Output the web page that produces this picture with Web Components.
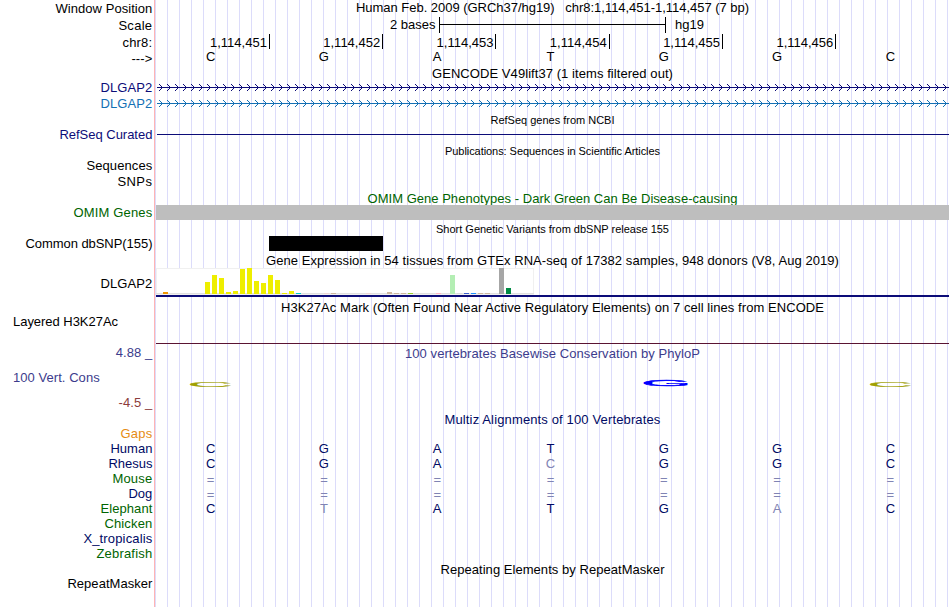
<!DOCTYPE html>
<html lang="en">
<head>
<meta charset="utf-8">
<title>hg19 chr8:1,114,451-1,114,457</title>
<style>
  body {
    margin: 0;
    background: #fff;
    overflow: hidden;
    font: 13px/15px "Liberation Sans", Arial, sans-serif;
    color: #000;
  }
</style>
</head>
<body>
<genome-browser>
  <track-row h="17">
    <track-text slot="label" style="--top: 1px" w="97">Window Position</track-text>
    <track-text slot="title" w="393">Human Feb. 2009 (GRCh37/hg19) &nbsp; chr8:1,114,451-1,114,457 (7 bp)</track-text>
  </track-row>
  <track-row h="17">
    <track-text slot="label" style="--top: 1px" w="34">Scale</track-text>
    <scale-bar from="2 bases" to="hg19"></scale-bar>
  </track-row>
  <track-row h="15">
    <track-text slot="label" style="--top: 1px" w="30">chr8:</track-text>
    <position-ruler start="1114451" count="6"></position-ruler>
  </track-row>
  <track-row h="17">
    <track-text slot="label" style="--top: 2px" w="21">---&gt;</track-text>
    <base-row bases="CGATGGC"></base-row>
  </track-row>

  <track-row h="14">
    <track-text slot="title" w="241">GENCODE V49lift37 (1 items filtered out)</track-text>
  </track-row>
  <track-row h="16" color="#0c0c78">
    <track-text slot="label" w="52">DLGAP2</track-text>
    <gene-line strand></gene-line>
  </track-row>
  <track-row h="16" color="#1470b4">
    <track-text slot="label" w="52">DLGAP2</track-text>
    <gene-line strand></gene-line>
  </track-row>

  <track-row h="15">
    <track-text slot="title" small w="124">RefSeq genes from NCBI</track-text>
  </track-row>
  <track-row h="16" color="#0c0c78">
    <track-text slot="label" w="93">RefSeq Curated</track-text>
    <gene-line></gene-line>
  </track-row>

  <track-row h="15">
    <track-text slot="title" small w="215">Publications: Sequences in Scientific Articles</track-text>
  </track-row>
  <track-row h="16">
    <track-text slot="label" w="66">Sequences</track-text>
  </track-row>
  <track-row h="17">
    <track-text slot="label" w="35">SNPs</track-text>
  </track-row>

  <track-row h="14" color="#006400">
    <track-text slot="title" w="370">OMIM Gene Phenotypes - Dark Green Can Be Disease-causing</track-text>
  </track-row>
  <track-row h="16" color="#006400">
    <track-text slot="label" w="79">OMIM Genes</track-text>
    <item-bar offset="2" width="793" fill="#bebebe"></item-bar>
  </track-row>

  <track-row h="15">
    <track-text slot="title" small w="233">Short Genetic Variants from dbSNP release 155</track-text>
  </track-row>
  <track-row h="17">
    <track-text slot="label" w="127">Common dbSNP(155)</track-text>
    <item-bar offset="115" width="114" fill="#000"></item-bar>
  </track-row>

  <track-row h="14">
    <track-text slot="title" w="573">Gene Expression in 54 tissues from GTEx RNA-seq of 17382 samples, 948 donors (V8, Aug 2019)</track-text>
  </track-row>
  <track-row h="33">
    <track-text slot="label" style="--top: 9px" w="52">DLGAP2</track-text>
    <expression-chart></expression-chart>
  </track-row>

  <track-row h="14">
    <track-text slot="title" w="543">H3K27Ac Mark (Often Found Near Active Regulatory Elements) on 7 cell lines from ENCODE</track-text>
  </track-row>
  <track-row h="31" align="left">
    <track-text slot="label" w="105">Layered H3K27Ac</track-text>
    <signal-baseline></signal-baseline>
  </track-row>

  <track-row h="67" color="#3c3c8c">
    <conservation-axis slot="label"></conservation-axis>
    <track-text slot="title" style="--top: 1px" w="295">100 vertebrates Basewise Conservation by PhyloP</track-text>
    <sequence-logo></sequence-logo>
  </track-row>

  <track-row h="14" color="#000a64">
    <track-text slot="title" w="216">Multiz Alignments of 100 Vertebrates</track-text>
  </track-row>
  <track-row h="15" color="#e68c14">
    <track-text slot="label" w="32">Gaps</track-text>
  </track-row>
  <track-row h="15" color="#000a64">
    <track-text slot="label" w="42">Human</track-text>
    <base-row bases="CGATGGC"></base-row>
  </track-row>
  <track-row h="15" color="#000a64">
    <track-text slot="label" w="44">Rhesus</track-text>
    <base-row bases="CGAcGGC"></base-row>
  </track-row>
  <track-row h="15" color="#006400">
    <track-text slot="label" w="40">Mouse</track-text>
    <base-row bases="======="></base-row>
  </track-row>
  <track-row h="15" color="#000a64">
    <track-text slot="label" w="24">Dog</track-text>
    <base-row bases="======="></base-row>
  </track-row>
  <track-row h="15" color="#006400">
    <track-text slot="label" w="52">Elephant</track-text>
    <base-row bases="CtATGaC" style="color: #000a64"></base-row>
  </track-row>
  <track-row h="15" color="#006400">
    <track-text slot="label" w="48">Chicken</track-text>
  </track-row>
  <track-row h="15" color="#000a64">
    <track-text slot="label" w="69">X_tropicalis</track-text>
  </track-row>
  <track-row h="16" color="#006400">
    <track-text slot="label" w="56">Zebrafish</track-text>
  </track-row>

  <track-row h="14">
    <track-text slot="title" w="224">Repeating Elements by RepeatMasker</track-text>
  </track-row>
  <track-row h="31">
    <track-text slot="label" w="85">RepeatMasker</track-text>
  </track-row>
</genome-browser>

<script>
class GenomeBrowser extends HTMLElement {
  constructor() {
    super()
    this.attachShadow({ mode: "open" })
    this.shadowRoot.innerHTML = `
      <slot></slot>
      <style>
        :host {
          display: flex;
          flex-direction: column;
          width: 950px;
          height: 607px;
          overflow: hidden;
          background:
            linear-gradient(#ffb4b4, #ffb4b4) 154px 0 / 1px 100% no-repeat,
            linear-gradient(to right, #fff 155px, transparent 155px),
            linear-gradient(to right, #dcdcfa 1px, transparent 1px) 167px 0 / 12px 100% repeat-x,
            #fff;
        }
      </style>
    `
  }
}

// One line of the browser: a label on the left, a title and drawn items on the right
class TrackRow extends HTMLElement {
  constructor() {
    super()
    this.attachShadow({ mode: "open" })
    const height = this.getAttribute("h")
    const color = this.getAttribute("color") || "inherit"
    const left = this.getAttribute("align") === "left"

    this.shadowRoot.innerHTML = `
      <div class="label"><slot name="label"></slot></div>
      <div class="body">
        <slot name="title"></slot>
        <slot></slot>
      </div>
      <style>
        :host {
          display: flex;
          flex: none;
          height: ${height}px;
          color: ${color};
          white-space: nowrap;
        }
        .label {
          display: flex;
          flex: none;
          box-sizing: border-box;
          width: 154px;
          padding: 0 1.6px 0 13px;
          justify-content: ${left ? "flex-start" : "flex-end"};
          align-items: flex-start;
        }
        .body {
          display: flex;
          flex-direction: column;
          align-items: center;
          width: 795px;
        }
        ::slotted([slot="title"]) { padding-left: 2px; }
      </style>
    `
  }
}

// Text tracked out or in to a given advance width
class TrackText extends HTMLElement {
  constructor() {
    super()
    this.attachShadow({ mode: "open" })
    this.shadowRoot.innerHTML = `
      <span><slot></slot></span>
      <style>
        :host {
          display: block;
          flex: none;
          height: 15px;
          margin-top: var(--top, 0);
          white-space: nowrap;
        }
        :host([small]) {
          font-size: 11px;
          line-height: 17px;
        }
        span { display: inline-block; }
      </style>
    `
  }
  connectedCallback() {
    const span = this.shadowRoot.querySelector("span")
    const width = Number(this.getAttribute("w"))
    if (!width) return
    const gap = (width - span.getBoundingClientRect().width) / this.textContent.length
    span.style.letterSpacing = `${gap}px`
  }
}

class ScaleBar extends HTMLElement {
  constructor() {
    super()
    this.attachShadow({ mode: "open" })
    this.shadowRoot.innerHTML = `
      <span>${this.getAttribute("from")}</span>
      <svg width="227" height="16" shape-rendering="crispEdges">
        <path d="M0 0h1v16h-1zM226 0h1v16h-1zM0 7h227v1H0z"/>
      </svg>
      <span>${this.getAttribute("to")}</span>
      <style>
        :host {
          display: grid;
          grid-template-columns: 285px 227px 1fr;
          width: 100%;
        }
        span:first-child {
          text-align: right;
          padding-right: 3.5px;
        }
        span { padding-left: 9px; }
      </style>
    `
  }
}

class PositionRuler extends HTMLElement {
  constructor() {
    super()
    this.attachShadow({ mode: "open" })
    const start = Number(this.getAttribute("start"))
    const count = Number(this.getAttribute("count"))
    const cells = Array.from({ length: count }, (_, i) =>
      `<span>${(start + i).toLocaleString("en-US")}</span>`).join("")

    this.shadowRoot.innerHTML = `
      ${cells}
      <style>
        :host {
          display: grid;
          grid-template-columns: repeat(7, 1fr);
          align-self: flex-start;
          width: 793px;
          margin-left: 2.6px;
        }
        span {
          line-height: 17px;
          height: 15px;
          border-right: 1px solid #000;
          padding-right: 2px;
          text-align: right;
        }
      </style>
    `
  }
}

// Lower case marks a base that differs from the reference genome
class BaseRow extends HTMLElement {
  constructor() {
    super()
    this.attachShadow({ mode: "open" })
    const cells = [...this.getAttribute("bases")].map(base => {
      const kind = base === "=" ? "faded gap" : base !== base.toUpperCase() ? "faded" : ""
      return `<span class="${kind}">${base.toUpperCase()}</span>`
    }).join("")

    this.shadowRoot.innerHTML = `
      ${cells}
      <style>
        :host {
          display: grid;
          grid-template-columns: repeat(7, 1fr);
          align-self: flex-start;
          width: 793px;
        }
        span { text-align: center; }
        .faded { color: #8084b4; }
        .gap { line-height: 18px; height: 15px; }
      </style>
    `
  }
}

class GeneLine extends HTMLElement {
  constructor() {
    super()
    this.attachShadow({ mode: "open" })
    let arrows = ""
    if (this.hasAttribute("strand")) {
      for (let x = 2; x < 790; x += 8) arrows += `M${x} 4l3.5 3.5l-3.5 3.5`
    }
    this.shadowRoot.innerHTML = `
      <svg width="792" height="15">
        <path d="${arrows}" fill="none" stroke="currentColor" stroke-width="1"/>
        <path d="M0 7h792v1H0z" fill="currentColor"/>
      </svg>
      <style>
        :host { display: block; align-self: flex-end; height: 15px; }
        svg { display: block; }
      </style>
    `
  }
}

class ItemBar extends HTMLElement {
  constructor() {
    super()
    this.attachShadow({ mode: "open" })
    this.shadowRoot.innerHTML = `
      <style>
        :host {
          display: block;
          align-self: flex-start;
          height: 15px;
          width: ${this.getAttribute("width")}px;
          margin-left: ${this.getAttribute("offset")}px;
          background: ${this.getAttribute("fill")};
        }
      </style>
    `
  }
}

class ExpressionChart extends HTMLElement {
  constructor() {
    super()
    this.attachShadow({ mode: "open" })
    // tissue index, bar height, colour
    const bars = [
      [0, 2, "#f09600"],
      [6, 12, "#eeee00"], [7, 19, "#eeee00"], [8, 16, "#eeee00"],
      [9, 2, "#eeee00"], [10, 3, "#eeee00"], [11, 25, "#eeee00"],
      [12, 26, "#eeee00"], [13, 13, "#eeee00"], [14, 11, "#eeee00"],
      [15, 19, "#eeee00"], [16, 14, "#eeee00"], [17, 1, "#eeee00"],
      [18, 3, "#eeee00"], [19, 1, "#00cdcd"], [23, 1, "#eed5d2"],
      [24, 1, "#cdb79e"], [29, 1, "#eed5d2"], [32, 2, "#cdb79e"],
      [33, 1, "#cdb79e"], [34, 1, "#cdb79e"], [35, 1, "#9acd32"],
      [39, 1, "#ffb6c1"], [41, 19, "#b4eeb4"], [42, 1, "#d9d9d9"],
      [43, 1, "#3a5fcd"], [44, 1, "#1e90ff"], [45, 1, "#cdb79e"],
      [46, 1, "#cdb79e"], [48, 26, "#a6a6a6"], [49, 6, "#008b45"]
    ]
    const rects = bars.map(([i, h, fill]) =>
      `<rect x="${7 + i * 7}" y="${27 - h}" width="5" height="${h}" fill="${fill}"/>`).join("")

    this.shadowRoot.innerHTML = `
      <svg width="793" height="31" shape-rendering="crispEdges">
        <rect y="1" width="378" height="27" fill="#f0f0f0"/>
        <rect x="1" y="2" width="376" height="24" fill="#fff"/>
        <rect y="26" width="378" height="1" fill="#e0e0e0"/>
        ${rects}
        <rect y="28" width="793" height="2" fill="#0c0c78"/>
      </svg>
      <style>
        :host { display: block; align-self: flex-end; }
        svg { display: block; }
      </style>
    `
  }
}

class SignalBaseline extends HTMLElement {
  constructor() {
    super()
    this.attachShadow({ mode: "open" })
    this.shadowRoot.innerHTML = `
      <style>
        :host {
          display: block;
          align-self: flex-end;
          width: 793px;
          height: 1px;
          margin-top: 29px;
          background: #5a1432;
        }
      </style>
    `
  }
}

class ConservationAxis extends HTMLElement {
  constructor() {
    super()
    this.attachShadow({ mode: "open" })
    this.shadowRoot.innerHTML = `
      <span class="end">4.88 _</span>
      <span class="name">100 Vert. Cons</span>
      <span class="end low">-4.5 _</span>
      <style>
        :host {
          display: flex;
          flex-direction: column;
          gap: 10px;
          width: 139.4px;
        }
        .end { text-align: right; letter-spacing: 0.1px; }
        .name { letter-spacing: 0.05px; }
        .low { color: #8c3c3c; }
      </style>
    `
  }
}

// Letters stretched to the score of each base
class SequenceLogo extends HTMLElement {
  constructor() {
    super()
    this.attachShadow({ mode: "open" })
    this.shadowRoot.innerHTML = `
      <svg width="795" height="20">
        <g font-size="100">
          <text fill="#a0a000" stroke="#a0a000" stroke-width="2" transform="translate(33.6 13.6) scale(.63 .066)">C</text>
          <text fill="#0000ff" stroke="#0000ff" stroke-width="4" transform="translate(487.4 13.4) scale(.635 .093)">G</text>
          <text fill="#a0a000" stroke="#a0a000" stroke-width="2" transform="translate(713.6 13.6) scale(.63 .066)">C</text>
        </g>
      </svg>
      <style>
        :host { display: block; margin-top: 12px; }
        svg { display: block; }
      </style>
    `
  }
}

customElements.define("genome-browser", GenomeBrowser)
customElements.define("track-row", TrackRow)
customElements.define("track-text", TrackText)
customElements.define("scale-bar", ScaleBar)
customElements.define("position-ruler", PositionRuler)
customElements.define("base-row", BaseRow)
customElements.define("gene-line", GeneLine)
customElements.define("item-bar", ItemBar)
customElements.define("expression-chart", ExpressionChart)
customElements.define("signal-baseline", SignalBaseline)
customElements.define("conservation-axis", ConservationAxis)
customElements.define("sequence-logo", SequenceLogo)
</script>
</body>
</html>
